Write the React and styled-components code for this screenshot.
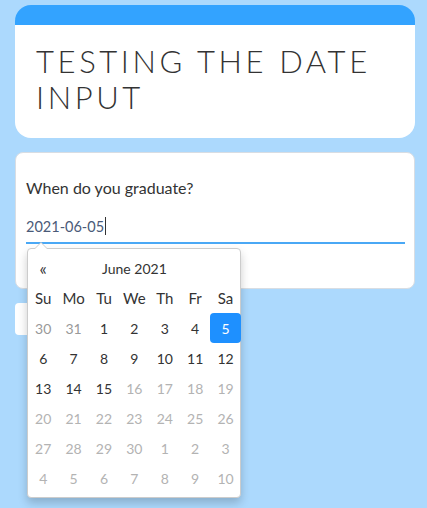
import React from "react";
import styled, { createGlobalStyle } from "styled-components";

const GlobalStyle = createGlobalStyle`
  html, body {
    margin: 0;
    padding: 0;
    background: #acd9fd;
    font-family: Lato, "Open Sans", sans-serif;
  }
`;

const Page = styled.div`
  padding: 5px 12px 0 15px;
  display: flex;
  flex-direction: column;
  gap: 14px;
  height: 508px;
  box-sizing: border-box;
  overflow: hidden;
`;

const HeaderCard = styled.div`
  background: #fff;
  border-radius: 16px;
  overflow: hidden;
  height: 133px;
  border-top: 20px solid #33a3ff;
  box-sizing: border-box;
  padding: 18px 20px 0 21px;
`;

const Title = styled.h1`
  margin: 0;
  font-family: Lato, sans-serif;
  font-weight: 300;
  font-size: 31px;
  line-height: 36px;
  letter-spacing: 3.6px;
  color: #333;
`;

const FormCard = styled.div`
  position: relative;
  background: #fff;
  border: 1px solid #d8dde3;
  border-radius: 8px;
  height: 137px;
  box-sizing: border-box;
  padding: 25px 9px 0 10px;
`;

const Label = styled.div`
  font-size: 16px;
  color: #333;
  margin-bottom: 18px;
`;

const DateField = styled.div`
  border-bottom: 2px solid #4aa8f5;
  padding-bottom: 5px;
  font-size: 14.5px;
  color: #4a5a78;
  height: 22px;
  display: flex;
  align-items: center;
`;

const Caret = styled.span`
  display: inline-block;
  width: 1px;
  height: 18px;
  background: #333;
  margin-left: 1px;
`;

const ButtonStub = styled.div`
  width: 120px;
  height: 32px;
  background: #fff;
  border-radius: 4px;
`;

const Popup = styled.div`
  position: absolute;
  left: 11px;
  top: 95px;
  width: 212px;
  background: #fff;
  border: 1px solid #ccc;
  border-radius: 4px;
  box-shadow: 0 5px 10px rgba(0, 0, 0, 0.2);
  padding: 4px 0 4px;
  z-index: 5;
  &::before {
    content: "";
    position: absolute;
    top: -7px;
    left: 6px;
    border-left: 7px solid transparent;
    border-right: 7px solid transparent;
    border-bottom: 7px solid #ccc;
  }
  &::after {
    content: "";
    position: absolute;
    top: -6px;
    left: 7px;
    border-left: 6px solid transparent;
    border-right: 6px solid transparent;
    border-bottom: 6px solid #fff;
  }
`;

const Grid = styled.div`
  display: grid;
  grid-template-columns: repeat(7, 30.4px);
  grid-auto-rows: 30px;
`;

const Cell = styled.div`
  display: flex;
  align-items: center;
  justify-content: center;
  font-size: 14px;
  border-radius: 4px;
  color: ${(p) => (p.$active ? "#fff" : p.$muted ? "#b3b3b3" : p.$old ? "#999" : "#333")};
  background: ${(p) => (p.$active ? "#1e90ff" : "transparent")};
`;

const NavCell = styled(Cell)`
  font-size: 17px;
`;

const HeadCell = styled(Cell)`
  font-size: 15px;
  color: #333;
`;

const MonthTitle = styled(Cell)`
  grid-column: span 5;
  font-size: 14px;
`;

const days = ["Su", "Mo", "Tu", "We", "Th", "Fr", "Sa"];

const cells = [
  [30, "old"], [31, "old"],
  ...Array.from({ length: 15 }, (_, i) => [i + 1, "on"]),
  ...Array.from({ length: 15 }, (_, i) => [i + 16, "muted"]),
  ...Array.from({ length: 10 }, (_, i) => [i + 1, "muted"]),
];

export default function App() {
  return (
    <>
      <GlobalStyle />
      <Page>
        <HeaderCard>
          <Title>TESTING THE DATE INPUT</Title>
        </HeaderCard>
        <FormCard>
          <Label>When do you graduate?</Label>
          <DateField>
            2021-06-05<Caret />
          </DateField>
          <Popup>
            <Grid>
              <NavCell>«</NavCell>
              <MonthTitle>June 2021</MonthTitle>
              <Cell />
              {days.map((d) => (
                <HeadCell key={d}>{d}</HeadCell>
              ))}
              {cells.map(([n, kind], i) => (
                <Cell
                  key={i}
                  $old={kind === "old"}
                  $muted={kind === "muted"}
                  $active={kind === "on" && n === 5}
                >
                  {n}
                </Cell>
              ))}
            </Grid>
          </Popup>
        </FormCard>
        <ButtonStub />
      </Page>
    </>
  );
}
